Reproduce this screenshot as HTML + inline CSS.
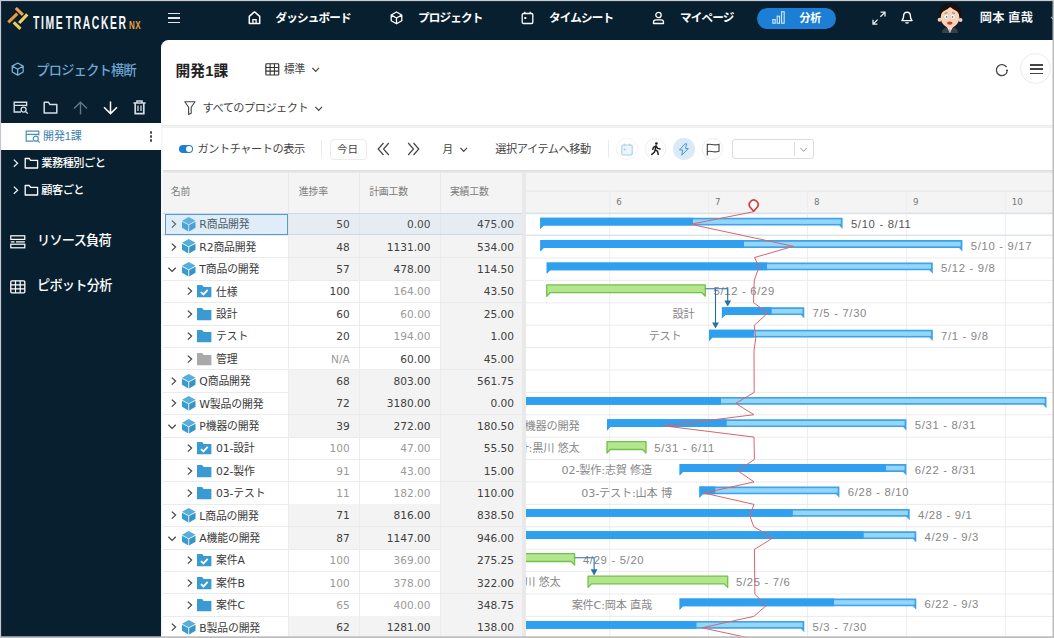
<!DOCTYPE html>
<html lang="ja"><head><meta charset="utf-8"><title>TimeTracker NX</title>
<style>
html,body{margin:0;padding:0;background:#081f2f;}
body{width:1054px;height:638px;overflow:hidden;position:relative;font-family:"Liberation Sans","Noto Sans CJK JP",sans-serif;}
#app{position:absolute;left:0;top:0;width:1054px;height:638px;overflow:hidden;background:#081f2f;}
.t{position:absolute;white-space:nowrap;}
.b{position:absolute;display:block;}
svg{overflow:visible;}
</style></head><body><div id="app">
<svg class="b" style="left:0.00px;top:0.00px;" width="40" height="40" viewBox="0 0 40 40" preserveAspectRatio="none">
<g stroke-linecap="butt" fill="none" stroke-width="3.1">
<line x1="15.8" y1="8" x2="22.9" y2="14.8" stroke="#f0a748"/>
<line x1="8.3" y1="22.3" x2="17.3" y2="13.7" stroke="#e99a45"/>
<line x1="27.3" y1="14.4" x2="19.2" y2="23" stroke="#f3d162"/>
<line x1="13.7" y1="22.4" x2="20.5" y2="28.8" stroke="#f1cb57"/>
</g></svg>
<div class="t" style="left:32.6px;top:10.9px;font-size:17.8px;line-height:24px;color:#f4f7fa;font-weight:700;transform:scaleX(0.585);transform-origin:0 50%;letter-spacing:2.7px;word-spacing:-5px;">TIME TRACKER</div>
<div class="t" style="left:129.3px;top:15.2px;font-size:11.8px;line-height:20px;color:#e9a13b;font-weight:700;transform:scaleX(0.68);transform-origin:0 50%;letter-spacing:0.6px;">NX</div>
<div class="b" style="left:168.00px;top:12.55px;width:12.40px;height:1.90px;background:#dfe6ee;"></div>
<div class="b" style="left:168.00px;top:17.05px;width:12.40px;height:1.90px;background:#dfe6ee;"></div>
<div class="b" style="left:168.00px;top:21.55px;width:12.40px;height:1.90px;background:#dfe6ee;"></div>
<svg class="b" style="left:247.80px;top:11.20px;" width="13" height="13.4" viewBox="0 0 13 13.4" preserveAspectRatio="none"><path d="M1.3 12.4 V5.4 Q6.5 0.6 6.5 0.9 Q6.5 0.6 11.7 5.4 V12.4 Z" fill="none" stroke="#fff" stroke-width="1.5" stroke-linejoin="round"/><path d="M4.9 12.4 V8.6 H8.1 V12.4" fill="none" stroke="#fff" stroke-width="1.3"/></svg>
<div class="t" style="top:9.90px;font-size:11.6px;color:#fff;line-height:16px;left:275.50px;font-weight:700;letter-spacing:-0.85px;">ダッシュボード</div>
<svg class="b" style="left:390.00px;top:11.20px;" width="13" height="14" viewBox="0 0 13 14" preserveAspectRatio="none"><path d="M6.5 1 L11.8 4 V9.8 L6.5 12.8 L1.2 9.8 V4 Z M1.4 4.1 L6.5 7 L11.6 4.1 M6.5 7 V12.6" fill="none" stroke="#fff" stroke-width="1.3" stroke-linejoin="round"/></svg>
<div class="t" style="top:9.90px;font-size:11.6px;color:#fff;line-height:16px;left:418.00px;font-weight:700;letter-spacing:-0.85px;">プロジェクト</div>
<svg class="b" style="left:521.00px;top:10.80px;" width="13" height="14" viewBox="0 0 13 14" preserveAspectRatio="none"><rect x="1.2" y="2.5" width="10.6" height="10" rx="1.3" fill="none" stroke="#fff" stroke-width="1.3"/><path d="M3.8 0.8 V3 M9.2 0.8 V3" stroke="#fff" stroke-width="1.3"/><rect x="3.3" y="6" width="2" height="2" fill="#fff"/></svg>
<div class="t" style="top:9.90px;font-size:11.6px;color:#fff;line-height:16px;left:549.00px;font-weight:700;letter-spacing:-0.85px;">タイムシート</div>
<svg class="b" style="left:652.00px;top:10.70px;" width="13" height="14" viewBox="0 0 13 14" preserveAspectRatio="none"><circle cx="6.5" cy="4" r="2.7" fill="none" stroke="#fff" stroke-width="1.3"/><path d="M1.5 12.5 V11 Q1.5 8.8 4 8.8 H9 Q11.5 8.8 11.5 11 V12.5 Z" fill="none" stroke="#fff" stroke-width="1.3" stroke-linejoin="round"/></svg>
<div class="t" style="top:9.90px;font-size:11.6px;color:#fff;line-height:16px;left:680.00px;font-weight:700;letter-spacing:-0.85px;">マイページ</div>
<div class="b" style="left:757.00px;top:7.60px;width:78.60px;height:21.40px;background:#1c7fd5;border-radius:11px;"></div>
<svg class="b" style="left:772.00px;top:11.40px;" width="13.4" height="13" viewBox="0 0 13.4 13" preserveAspectRatio="none"><rect x="0.8" y="8.6" width="2.4" height="3.6" fill="none" stroke="#d4e9fb" stroke-width="1.1"/><rect x="5.2" y="5.2" width="2.4" height="7" fill="none" stroke="#d4e9fb" stroke-width="1.1"/><rect x="9.6" y="0.8" width="2.6" height="11.4" fill="none" stroke="#d4e9fb" stroke-width="1.1"/></svg>
<div class="t" style="top:10.30px;font-size:11px;color:#fff;line-height:16px;left:799.60px;font-weight:700;letter-spacing:-0.4px;">分析</div>
<svg class="b" style="left:872.20px;top:10.60px;" width="14" height="14.4" viewBox="0 0 14 14.4" preserveAspectRatio="none"><path d="M8.6 1.2 H13 V5.6 M12.8 1.4 L8.4 5.8 M5.4 13.2 H1 V8.8 M1.2 13 L5.6 8.6" fill="none" stroke="#e8eef5" stroke-width="1.3"/></svg>
<svg class="b" style="left:900.00px;top:10.40px;" width="14" height="14" viewBox="0 0 14 14" preserveAspectRatio="none"><path d="M2 10.6 H12 Q10.4 9 10.4 6 Q10.4 2.2 7 2.2 Q3.6 2.2 3.6 6 Q3.6 9 2 10.6 Z" fill="none" stroke="#fff" stroke-width="1.4" stroke-linejoin="round"/><path d="M5.4 12.5 Q7 13.6 8.6 12.5" fill="none" stroke="#fff" stroke-width="1.3"/></svg>
<svg class="b" style="left:930px;top:0px;" width="40" height="40" viewBox="930 0 40 40">
<path d="M942 33 Q942.3 28.2 946.5 27.3 L953.3 27.3 Q957.6 28.2 958 33 Z" fill="#3b3f49"/>
<path d="M947 27 L949.9 33 L952.8 27 Z" fill="#f1f1f4"/>
<path d="M949.6 28.4 L950.2 28.4 L950.6 31.6 L949.9 33 L949.2 31.6 Z" fill="#9aa0ad"/>
<circle cx="939.6" cy="19.8" r="2" fill="#fbc9be"/><circle cx="960.5" cy="19.9" r="2" fill="#fbc9be"/>
<path d="M940.6 16 Q940.2 7.5 950 7.2 Q959.8 7.5 959.4 16 Q959.6 22.5 955 26 Q952 28.2 950 28.2 Q948 28.2 945 26 Q940.4 22.5 940.6 16 Z" fill="#fcd2b3"/>
<path d="M939.2 17.2 Q936.8 3.4 950 3 Q963.2 3.4 960.8 17.2 L959.3 16.6 Q958.8 11.5 955.2 10.2 Q952 9 950.3 6.6 Q948.4 9.2 944.8 10.4 Q941.2 11.8 940.8 16.6 Z" fill="#17110f"/>
<circle cx="946.4" cy="16.8" r="2.5" fill="#fdfdfd" stroke="#c9b8ae" stroke-width="0.5"/><circle cx="952.7" cy="16.8" r="2.5" fill="#fdfdfd" stroke="#c9b8ae" stroke-width="0.5"/>
<circle cx="946.6" cy="16.9" r="0.9" fill="#6c7a86"/><circle cx="952.5" cy="16.9" r="0.9" fill="#6c7a86"/>
<path d="M944.6 13.3 L947.6 12.8 M952 12.8 L955 13.3" stroke="#6b5040" stroke-width="0.7" fill="none"/>
<ellipse cx="949.8" cy="23.1" rx="2.8" ry="1.6" fill="#d63636"/>
</svg>
<div class="t" style="top:10.10px;font-size:12.2px;color:#f2f5f8;line-height:16px;left:979.80px;font-weight:700;letter-spacing:0.25px;">岡本 直哉</div>
<svg class="b" style="left:1050.30px;top:14.60px;" width="8" height="8" viewBox="0 0 8 8" preserveAspectRatio="none"><path d="M1 2 L4 5 L7 2" fill="none" stroke="#aab" stroke-width="1.1"/></svg>
<svg class="b" style="left:10.60px;top:62.40px;" width="13.4" height="14.4" viewBox="0 0 13 14" preserveAspectRatio="none"><path d="M6.5 1 L11.8 4 V9.8 L6.5 12.8 L1.2 9.8 V4 Z M1.4 4.1 L6.5 7 L11.6 4.1 M6.5 7 V12.6" fill="none" stroke="#7db3da" stroke-width="1.2" stroke-linejoin="round"/></svg>
<div class="t" style="top:62.80px;font-size:13.2px;color:#6ea6d3;line-height:16px;left:36.20px;font-weight:500;letter-spacing:-0.7px;">プロジェクト横断</div>
<svg class="b" style="left:12.80px;top:101.40px;" width="16" height="13" viewBox="0 0 16 13" preserveAspectRatio="none"><path d="M8 11 H1.2 V1.2 H13.6 V5.2 M1.2 4.4 H13.6" fill="none" stroke="#d5dde6" stroke-width="1.4"/><circle cx="10.6" cy="8.6" r="2.5" fill="none" stroke="#d5dde6" stroke-width="1.3"/><path d="M12.4 10.5 L14.8 12.6" stroke="#d5dde6" stroke-width="1.3"/></svg>
<svg class="b" style="left:42.80px;top:101.20px;" width="15" height="13" viewBox="0 0 15 13" preserveAspectRatio="none"><path d="M1.2 12 V1.2 H5.4 L6.8 3.4 H13.8 V12 Z" fill="none" stroke="#d5dde6" stroke-width="1.5" stroke-linejoin="round"/></svg>
<svg class="b" style="left:72.80px;top:101.00px;" width="15" height="14" viewBox="0 0 15 14" preserveAspectRatio="none"><path d="M7.5 13.4 V1.6 M1 7.6 L7.5 1.2 L14 7.6" fill="none" stroke="#61778a" stroke-width="1.4"/></svg>
<svg class="b" style="left:102.60px;top:101.00px;" width="15" height="14" viewBox="0 0 15 14" preserveAspectRatio="none"><path d="M7.5 0.4 V12.2 M1 6.2 L7.5 12.6 L14 6.2" fill="none" stroke="#fff" stroke-width="1.5"/></svg>
<svg class="b" style="left:133.00px;top:100.40px;" width="13" height="15" viewBox="0 0 13 15" preserveAspectRatio="none"><path d="M0.4 2.9 H12.6 M4 2.6 V0.9 H9 V2.6" fill="none" stroke="#d5dde6" stroke-width="1.5"/><path d="M2.2 3 V13.6 H10.8 V3" fill="none" stroke="#d5dde6" stroke-width="1.7"/><path d="M5 5.4 V11 M8 5.4 V11" stroke="#d5dde6" stroke-width="1.3"/></svg>
<div class="b" style="left:1.00px;top:122.60px;width:160.00px;height:27.20px;background:#fff;"></div>
<svg class="b" style="left:24.50px;top:130.00px;" width="16" height="13" viewBox="0 0 16 13" preserveAspectRatio="none"><path d="M8.5 11.2 H1.2 V1.2 H13.8 V5.4 M1.2 4.3 H13.8" fill="none" stroke="#4f8fb6" stroke-width="1.2"/><circle cx="10.8" cy="8.7" r="2.5" fill="none" stroke="#4f8fb6" stroke-width="1.2"/><path d="M12.6 10.6 L14.8 12.6" stroke="#4f8fb6" stroke-width="1.2"/></svg>
<div class="t" style="top:128.40px;font-size:11px;color:#3c80ae;line-height:16px;left:43.00px;letter-spacing:-0.1px;">開発1課</div>
<div class="b" style="left:149.70px;top:131.45px;width:2.30px;height:2.30px;background:#4a4a4a;border-radius:50%;"></div>
<div class="b" style="left:149.70px;top:135.45px;width:2.30px;height:2.30px;background:#4a4a4a;border-radius:50%;"></div>
<div class="b" style="left:149.70px;top:139.45px;width:2.30px;height:2.30px;background:#4a4a4a;border-radius:50%;"></div>
<svg class="b" style="left:12.80px;top:158.80px;" width="6" height="8.4" viewBox="0 0 6 8.4" preserveAspectRatio="none"><path d="M0.8 0.6 L4.6 4.2 L0.8 7.800000000000001" fill="none" stroke="#e8edf2" stroke-width="1.3"/></svg>
<svg class="b" style="left:23.50px;top:157.00px;" width="15" height="12" viewBox="0 0 15 12" preserveAspectRatio="none"><path d="M1.2 11 V1.5 H5.4 L6.6 3.4 H13.6 V11 Z" fill="none" stroke="#fff" stroke-width="1.3" stroke-linejoin="round"/></svg>
<div class="t" style="top:155.00px;font-size:11.2px;color:#fff;line-height:16px;left:41.30px;font-weight:500;letter-spacing:-0.5px;">業務種別ごと</div>
<svg class="b" style="left:12.80px;top:185.80px;" width="6" height="8.4" viewBox="0 0 6 8.4" preserveAspectRatio="none"><path d="M0.8 0.6 L4.6 4.2 L0.8 7.800000000000001" fill="none" stroke="#e8edf2" stroke-width="1.3"/></svg>
<svg class="b" style="left:23.50px;top:184.00px;" width="15" height="12" viewBox="0 0 15 12" preserveAspectRatio="none"><path d="M1.2 11 V1.5 H5.4 L6.6 3.4 H13.6 V11 Z" fill="none" stroke="#fff" stroke-width="1.3" stroke-linejoin="round"/></svg>
<div class="t" style="top:182.00px;font-size:11.2px;color:#fff;line-height:16px;left:41.30px;font-weight:500;letter-spacing:-0.5px;">顧客ごと</div>
<svg class="b" style="left:9.50px;top:235.00px;" width="16" height="14" viewBox="0 0 16 14" preserveAspectRatio="none"><rect x="0.8" y="0.8" width="14" height="3.6" fill="none" stroke="#fff" stroke-width="1.2"/><rect x="0.8" y="9.2" width="14" height="3.6" fill="none" stroke="#fff" stroke-width="1.2"/><path d="M0.8 6.8 H4.5 M6 6.8 H14.8" stroke="#fff" stroke-width="1.2"/></svg>
<div class="t" style="top:233.00px;font-size:13.2px;color:#fff;line-height:16px;left:37.00px;font-weight:500;letter-spacing:-0.75px;">リソース負荷</div>
<svg class="b" style="left:9.50px;top:280.00px;" width="16" height="14" viewBox="0 0 16 14" preserveAspectRatio="none"><rect x="0.8" y="0.8" width="14" height="12" rx="1" fill="none" stroke="#fff" stroke-width="1.3"/><path d="M0.8 4.8 H14.8 M0.8 8.8 H14.8 M5.5 0.8 V12.8 M10.2 0.8 V12.8" stroke="#fff" stroke-width="1.2"/></svg>
<div class="t" style="top:278.30px;font-size:13.2px;color:#fff;line-height:16px;left:37.00px;font-weight:500;letter-spacing:-0.75px;">ピボット分析</div>
<div class="b" style="left:161.00px;top:40.00px;width:893.00px;height:598.00px;background:#fff;border-top-left-radius:7.5px;"></div>
<div class="t" style="top:60.50px;font-size:14.7px;color:#222;line-height:20px;left:175.50px;font-weight:700;letter-spacing:0.15px;">開発1課</div>
<svg class="b" style="left:264.80px;top:63.00px;" width="14.6" height="12.8" viewBox="0 0 13.6 12.6" preserveAspectRatio="none"><rect x="0.8" y="0.8" width="12" height="11" rx="0.8" fill="none" stroke="#333" stroke-width="1.1"/><path d="M0.8 4.4 H12.8 M0.8 8 H12.8 M4.8 0.8 V11.8 M8.8 0.8 V11.8" stroke="#333" stroke-width="1"/></svg>
<div class="t" style="top:61.00px;font-size:10.8px;color:#444;line-height:16px;left:283.80px;">標準</div>
<svg class="b" style="left:312.20px;top:66.80px;" width="7.4" height="5.4" viewBox="0 0 7.4 5.4" preserveAspectRatio="none"><path d="M0.4 0.8 L3.7 4.4 L7.0 0.8" fill="none" stroke="#444" stroke-width="1.15"/></svg>
<svg class="b" style="left:184.00px;top:101.00px;" width="12" height="15" viewBox="0 0 12 15" preserveAspectRatio="none"><path d="M0.8 0.8 H11 L7.2 6.3 V12.2 L4.6 13.6 V6.3 Z" fill="none" stroke="#444" stroke-width="1.1" stroke-linejoin="round"/></svg>
<div class="t" style="top:100.30px;font-size:11.2px;color:#444;line-height:16px;left:202.50px;letter-spacing:-0.5px;">すべてのプロジェクト</div>
<svg class="b" style="left:314.80px;top:106.20px;" width="7.4" height="5.4" viewBox="0 0 7.4 5.4" preserveAspectRatio="none"><path d="M0.4 0.8 L3.7 4.4 L7.0 0.8" fill="none" stroke="#444" stroke-width="1.15"/></svg>
<svg class="b" style="left:994.50px;top:62.50px;" width="14" height="14" viewBox="0 0 14 14" preserveAspectRatio="none"><path d="M11.6 4.2 A5.5 5.5 0 1 0 12.2 8.6" fill="none" stroke="#444" stroke-width="1.3"/><circle cx="12" cy="7.6" r="1.1" fill="#444"/></svg>
<div class="b" style="left:1020.00px;top:53.00px;width:31.00px;height:31.00px;background:#fff;border:1px solid #ececec;border-radius:50%;box-sizing:border-box;"></div>
<div class="b" style="left:1030.00px;top:64.00px;width:12.50px;height:1.60px;background:#444;"></div>
<div class="b" style="left:1030.00px;top:68.40px;width:12.50px;height:1.60px;background:#444;"></div>
<div class="b" style="left:1030.00px;top:72.80px;width:12.50px;height:1.60px;background:#444;"></div>
<div class="b" style="left:161.00px;top:125.40px;width:893.00px;height:2.60px;background:#f1f1f1;"></div>
<div class="b" style="left:161.00px;top:124.80px;width:893.00px;height:0.80px;background:#ebebeb;"></div>
<div class="b" style="left:178.50px;top:145.00px;width:14.50px;height:7.80px;background:#1f7ed2;border-radius:4px;"></div>
<div class="b" style="left:185.90px;top:145.90px;width:6.00px;height:6.00px;background:#fff;border-radius:50%;"></div>
<div class="t" style="top:140.70px;font-size:11.2px;color:#444;line-height:16px;left:197.50px;letter-spacing:-0.45px;">ガントチャートの表示</div>
<div class="b" style="left:320.50px;top:140.00px;width:1.00px;height:18.00px;background:#ebebeb;"></div>
<div class="b" style="left:329.50px;top:138.50px;width:37.00px;height:21.00px;background:#fff;border:1px solid #ececec;border-radius:4px;box-sizing:border-box;"></div>
<div class="t" style="top:140.80px;font-size:10.6px;color:#444;line-height:16px;left:337.00px;">今日</div>
<svg class="b" style="left:377.30px;top:142.00px;" width="13" height="14" viewBox="0 0 13 14" preserveAspectRatio="none"><path d="M6.5 1 L1.2 7 L6.5 13 M11.8 1 L6.5 7 L11.8 13" fill="none" stroke="#444" stroke-width="1.2"/></svg>
<svg class="b" style="left:407.00px;top:142.00px;" width="13" height="14" viewBox="0 0 13 14" preserveAspectRatio="none"><path d="M1.2 1 L6.5 7 L1.2 13 M6.5 1 L11.8 7 L6.5 13" fill="none" stroke="#444" stroke-width="1.2"/></svg>
<div class="t" style="top:140.80px;font-size:10.6px;color:#444;line-height:16px;left:442.50px;">月</div>
<svg class="b" style="left:459.80px;top:146.90px;" width="7.4" height="5.4" viewBox="0 0 7.4 5.4" preserveAspectRatio="none"><path d="M0.4 0.8 L3.7 4.4 L7.0 0.8" fill="none" stroke="#444" stroke-width="1.15"/></svg>
<div class="t" style="top:140.80px;font-size:11.2px;color:#444;line-height:16px;left:495.30px;letter-spacing:-0.45px;">選択アイテムへ移動</div>
<div class="b" style="left:608.00px;top:140.00px;width:1.00px;height:18.00px;background:#ebebeb;"></div>
<div class="b" style="left:616.30px;top:138.20px;width:21.40px;height:21.40px;background:#fff;border:1px solid #f4f4f4;border-radius:50%;box-sizing:border-box;"></div>
<svg class="b" style="left:620.80px;top:142.80px;" width="12" height="13" viewBox="0 0 12 13" preserveAspectRatio="none"><rect x="0.8" y="2" width="10.4" height="10" rx="1.2" fill="#edf5fc" stroke="#a9cde9" stroke-width="1.1"/><path d="M3.4 0.6 V2.6 M8.6 0.6 V2.6" stroke="#a9cde9" stroke-width="1.1"/><rect x="2.8" y="5.6" width="1.7" height="1.7" fill="#9cc4e4"/></svg>
<div class="b" style="left:644.80px;top:138.20px;width:21.40px;height:21.40px;background:#fff;border:1px solid #eeeeee;border-radius:50%;box-sizing:border-box;"></div>
<svg class="b" style="left:649.50px;top:142.30px;" width="12" height="13" viewBox="0 0 12 13" preserveAspectRatio="none"><circle cx="6.4" cy="1.5" r="1.35" fill="#222"/><path d="M6 3.8 L5.2 7.6 L7.6 9.4 L8.2 12.4 M5.2 7.6 L4.4 10.2 L1.8 12.4 M6 4 L3.4 5.4 L2.8 7.4 M6.2 4.2 L7.8 6.4 L10 7" fill="none" stroke="#222" stroke-width="1.5" stroke-linecap="round" stroke-linejoin="round"/></svg>
<div class="b" style="left:673.30px;top:138.20px;width:21.40px;height:21.40px;background:#dbeaf7;border-radius:50%;"></div>
<svg class="b" style="left:678.20px;top:142.60px;" width="12" height="13" viewBox="0 0 12 13" preserveAspectRatio="none"><path d="M7 0.8 L1.4 7 H4.6 L3.8 12.2 L10.4 5.6 H7.4 L8.8 0.8 Z" fill="#d3e7f8" stroke="#4b9ad6" stroke-width="1" stroke-linejoin="round"/></svg>
<div class="b" style="left:701.80px;top:138.20px;width:21.40px;height:21.40px;background:#fff;border:1px solid #eeeeee;border-radius:50%;box-sizing:border-box;"></div>
<svg class="b" style="left:706.00px;top:142.60px;" width="14" height="13" viewBox="0 0 14 13" preserveAspectRatio="none"><path d="M1.3 12.6 V0.8 M1.3 1.8 C4 0 7.5 3.2 13 1.2 V8.2 C7.5 10.2 4 7 1.3 8.8" fill="none" stroke="#444" stroke-width="1.15" stroke-linejoin="round"/></svg>
<div class="b" style="left:732.30px;top:138.50px;width:82.00px;height:20.50px;background:#fff;border:1px solid #dcdcdc;border-radius:3px;box-sizing:border-box;"></div>
<div class="b" style="left:794.30px;top:142.00px;width:1.00px;height:14.00px;background:#dcdcdc;"></div>
<svg class="b" style="left:799.50px;top:146.80px;" width="7.2" height="5.4" viewBox="0 0 7.2 5.4" preserveAspectRatio="none"><path d="M0.4 0.8 L3.6 4.4 L6.8 0.8" fill="none" stroke="#999" stroke-width="1"/></svg>
<div class="b" style="left:163px;top:170px;width:891px;height:3px;background:linear-gradient(#dcdcdc,#ececec);"></div>
<div class="b" style="left:163.00px;top:172.80px;width:359.00px;height:40.20px;background:#f4f4f4;"></div>
<div class="b" style="left:288.10px;top:172.80px;width:1.00px;height:40.20px;background:#e9e9e9;"></div>
<div class="b" style="left:359.00px;top:172.80px;width:1.00px;height:40.20px;background:#e9e9e9;"></div>
<div class="b" style="left:439.90px;top:172.80px;width:1.00px;height:40.20px;background:#e9e9e9;"></div>
<div class="b" style="left:521.50px;top:172.80px;width:1.00px;height:40.20px;background:#e9e9e9;"></div>
<div class="t" style="top:184.10px;font-size:9.9px;color:#7c7c7c;line-height:16px;left:170.80px;letter-spacing:-0.2px;">名前</div>
<div class="t" style="top:184.10px;font-size:9.9px;color:#7c7c7c;line-height:16px;left:298.80px;letter-spacing:-0.2px;">進捗率</div>
<div class="t" style="top:184.10px;font-size:9.9px;color:#7c7c7c;line-height:16px;left:369.20px;letter-spacing:-0.2px;">計画工数</div>
<div class="t" style="top:184.10px;font-size:9.9px;color:#7c7c7c;line-height:16px;left:449.90px;letter-spacing:-0.2px;">実績工数</div>
<div class="b" style="left:288.60px;top:213.00px;width:233.40px;height:22.40px;background:#f3f3f3;"></div>
<div class="b" style="left:162.00px;top:234.90px;width:360.00px;height:1.00px;background:#ebebeb;"></div>
<div class="b" style="left:288.10px;top:213.00px;width:1.00px;height:22.40px;background:#ececec;"></div>
<div class="b" style="left:359.00px;top:213.00px;width:1.00px;height:22.40px;background:#ececec;"></div>
<div class="b" style="left:439.90px;top:213.00px;width:1.00px;height:22.40px;background:#ececec;"></div>
<svg class="b" style="left:171.00px;top:220.10px;" width="6" height="8.2" viewBox="0 0 6 8.2" preserveAspectRatio="none"><path d="M0.8 0.6 L4.6 4.1 L0.8 7.6" fill="none" stroke="#444" stroke-width="1.25"/></svg>
<svg class="b" style="left:181.50px;top:216.90px;" width="13.5" height="14.5" viewBox="0 0 14 15" preserveAspectRatio="none"><path d="M7 0 L14 4 L7 7.7 L0 4 Z" fill="#55aedb"/><path d="M0 4.9 L6.55 8.4 V15 L0 11.2 Z" fill="#3a9ccd"/><path d="M14 4.9 L7.45 8.4 V15 L14 11.2 Z" fill="#3795c6"/></svg>
<div class="t" style="top:217.40px;font-size:10.85px;color:#3a3a3a;line-height:16px;left:199.30px;letter-spacing:-0.15px;font-family:'DejaVu Sans','Noto Sans CJK JP',sans-serif;">R商品開発</div>
<div class="t" style="top:216.20px;font-size:10.6px;color:#404040;line-height:16px;right:704.30px;font-family:'DejaVu Sans','Noto Sans CJK JP',sans-serif;">50</div>
<div class="t" style="top:216.20px;font-size:10.6px;color:#404040;line-height:16px;right:623.40px;font-family:'DejaVu Sans','Noto Sans CJK JP',sans-serif;">0.00</div>
<div class="t" style="top:216.20px;font-size:10.6px;color:#404040;line-height:16px;right:540.00px;font-family:'DejaVu Sans','Noto Sans CJK JP',sans-serif;">475.00</div>
<div class="b" style="left:288.60px;top:235.40px;width:233.40px;height:22.40px;background:#f3f3f3;"></div>
<div class="b" style="left:162.00px;top:257.30px;width:360.00px;height:1.00px;background:#ebebeb;"></div>
<div class="b" style="left:288.10px;top:235.40px;width:1.00px;height:22.40px;background:#ececec;"></div>
<div class="b" style="left:359.00px;top:235.40px;width:1.00px;height:22.40px;background:#ececec;"></div>
<div class="b" style="left:439.90px;top:235.40px;width:1.00px;height:22.40px;background:#ececec;"></div>
<svg class="b" style="left:171.00px;top:242.50px;" width="6" height="8.2" viewBox="0 0 6 8.2" preserveAspectRatio="none"><path d="M0.8 0.6 L4.6 4.1 L0.8 7.6" fill="none" stroke="#444" stroke-width="1.25"/></svg>
<svg class="b" style="left:181.50px;top:239.30px;" width="13.5" height="14.5" viewBox="0 0 14 15" preserveAspectRatio="none"><path d="M7 0 L14 4 L7 7.7 L0 4 Z" fill="#55aedb"/><path d="M0 4.9 L6.55 8.4 V15 L0 11.2 Z" fill="#3a9ccd"/><path d="M14 4.9 L7.45 8.4 V15 L14 11.2 Z" fill="#3795c6"/></svg>
<div class="t" style="top:239.80px;font-size:10.85px;color:#3a3a3a;line-height:16px;left:199.30px;letter-spacing:-0.15px;font-family:'DejaVu Sans','Noto Sans CJK JP',sans-serif;">R2商品開発</div>
<div class="t" style="top:238.60px;font-size:10.6px;color:#404040;line-height:16px;right:704.30px;font-family:'DejaVu Sans','Noto Sans CJK JP',sans-serif;">48</div>
<div class="t" style="top:238.60px;font-size:10.6px;color:#404040;line-height:16px;right:623.40px;font-family:'DejaVu Sans','Noto Sans CJK JP',sans-serif;">1131.00</div>
<div class="t" style="top:238.60px;font-size:10.6px;color:#404040;line-height:16px;right:540.00px;font-family:'DejaVu Sans','Noto Sans CJK JP',sans-serif;">534.00</div>
<div class="b" style="left:288.60px;top:257.80px;width:233.40px;height:22.40px;background:#f3f3f3;"></div>
<div class="b" style="left:162.00px;top:279.70px;width:360.00px;height:1.00px;background:#ebebeb;"></div>
<div class="b" style="left:288.10px;top:257.80px;width:1.00px;height:22.40px;background:#ececec;"></div>
<div class="b" style="left:359.00px;top:257.80px;width:1.00px;height:22.40px;background:#ececec;"></div>
<div class="b" style="left:439.90px;top:257.80px;width:1.00px;height:22.40px;background:#ececec;"></div>
<svg class="b" style="left:168.40px;top:266.80px;" width="8.2" height="5.4" viewBox="0 0 8.2 5.4" preserveAspectRatio="none"><path d="M0.4 0.8 L4.1 4.4 L7.799999999999999 0.8" fill="none" stroke="#444" stroke-width="1.25"/></svg>
<svg class="b" style="left:181.50px;top:261.70px;" width="13.5" height="14.5" viewBox="0 0 14 15" preserveAspectRatio="none"><path d="M7 0 L14 4 L7 7.7 L0 4 Z" fill="#55aedb"/><path d="M0 4.9 L6.55 8.4 V15 L0 11.2 Z" fill="#3a9ccd"/><path d="M14 4.9 L7.45 8.4 V15 L14 11.2 Z" fill="#3795c6"/></svg>
<div class="t" style="top:262.20px;font-size:10.85px;color:#3a3a3a;line-height:16px;left:199.30px;letter-spacing:-0.15px;font-family:'DejaVu Sans','Noto Sans CJK JP',sans-serif;">T商品の開発</div>
<div class="t" style="top:261.00px;font-size:10.6px;color:#404040;line-height:16px;right:704.30px;font-family:'DejaVu Sans','Noto Sans CJK JP',sans-serif;">57</div>
<div class="t" style="top:261.00px;font-size:10.6px;color:#404040;line-height:16px;right:623.40px;font-family:'DejaVu Sans','Noto Sans CJK JP',sans-serif;">478.00</div>
<div class="t" style="top:261.00px;font-size:10.6px;color:#404040;line-height:16px;right:540.00px;font-family:'DejaVu Sans','Noto Sans CJK JP',sans-serif;">114.50</div>
<div class="b" style="left:440.40px;top:280.20px;width:81.60px;height:22.40px;background:#f3f3f3;"></div>
<div class="b" style="left:162.00px;top:302.10px;width:360.00px;height:1.00px;background:#ebebeb;"></div>
<div class="b" style="left:288.10px;top:280.20px;width:1.00px;height:22.40px;background:#ececec;"></div>
<div class="b" style="left:359.00px;top:280.20px;width:1.00px;height:22.40px;background:#ececec;"></div>
<div class="b" style="left:439.90px;top:280.20px;width:1.00px;height:22.40px;background:#ececec;"></div>
<svg class="b" style="left:187.00px;top:287.30px;" width="6" height="8.2" viewBox="0 0 6 8.2" preserveAspectRatio="none"><path d="M0.8 0.6 L4.6 4.1 L0.8 7.6" fill="none" stroke="#444" stroke-width="1.25"/></svg>
<svg class="b" style="left:197.40px;top:285.30px;" width="14.4" height="12.3" viewBox="0 0 14.5 12.5" preserveAspectRatio="none"><path d="M0 0 H5.2 L6.7 2 H14.5 V12.5 H0 Z" fill="#3a9bd2"/><path d="M4 7.2 L6.5 9.6 L10.8 5" fill="none" stroke="#fff" stroke-width="1.8"/></svg>
<div class="t" style="top:284.60px;font-size:10.85px;color:#3a3a3a;line-height:16px;left:216.00px;letter-spacing:-0.15px;font-family:'DejaVu Sans','Noto Sans CJK JP',sans-serif;">仕様</div>
<div class="t" style="top:283.40px;font-size:10.6px;color:#404040;line-height:16px;right:704.30px;font-family:'DejaVu Sans','Noto Sans CJK JP',sans-serif;">100</div>
<div class="t" style="top:283.40px;font-size:10.6px;color:#9a9a9a;line-height:16px;right:623.40px;font-family:'DejaVu Sans','Noto Sans CJK JP',sans-serif;">164.00</div>
<div class="t" style="top:283.40px;font-size:10.6px;color:#404040;line-height:16px;right:540.00px;font-family:'DejaVu Sans','Noto Sans CJK JP',sans-serif;">43.50</div>
<div class="b" style="left:440.40px;top:302.60px;width:81.60px;height:22.40px;background:#f3f3f3;"></div>
<div class="b" style="left:162.00px;top:324.50px;width:360.00px;height:1.00px;background:#ebebeb;"></div>
<div class="b" style="left:288.10px;top:302.60px;width:1.00px;height:22.40px;background:#ececec;"></div>
<div class="b" style="left:359.00px;top:302.60px;width:1.00px;height:22.40px;background:#ececec;"></div>
<div class="b" style="left:439.90px;top:302.60px;width:1.00px;height:22.40px;background:#ececec;"></div>
<svg class="b" style="left:187.00px;top:309.70px;" width="6" height="8.2" viewBox="0 0 6 8.2" preserveAspectRatio="none"><path d="M0.8 0.6 L4.6 4.1 L0.8 7.6" fill="none" stroke="#444" stroke-width="1.25"/></svg>
<svg class="b" style="left:197.40px;top:307.70px;" width="14.4" height="12.3" viewBox="0 0 14.5 12.5" preserveAspectRatio="none"><path d="M0 0 H5.2 L6.7 2 H14.5 V12.5 H0 Z" fill="#3a9bd2"/></svg>
<div class="t" style="top:307.00px;font-size:10.85px;color:#3a3a3a;line-height:16px;left:216.00px;letter-spacing:-0.15px;font-family:'DejaVu Sans','Noto Sans CJK JP',sans-serif;">設計</div>
<div class="t" style="top:305.80px;font-size:10.6px;color:#404040;line-height:16px;right:704.30px;font-family:'DejaVu Sans','Noto Sans CJK JP',sans-serif;">60</div>
<div class="t" style="top:305.80px;font-size:10.6px;color:#9a9a9a;line-height:16px;right:623.40px;font-family:'DejaVu Sans','Noto Sans CJK JP',sans-serif;">60.00</div>
<div class="t" style="top:305.80px;font-size:10.6px;color:#404040;line-height:16px;right:540.00px;font-family:'DejaVu Sans','Noto Sans CJK JP',sans-serif;">25.00</div>
<div class="b" style="left:440.40px;top:325.00px;width:81.60px;height:22.40px;background:#f3f3f3;"></div>
<div class="b" style="left:162.00px;top:346.90px;width:360.00px;height:1.00px;background:#ebebeb;"></div>
<div class="b" style="left:288.10px;top:325.00px;width:1.00px;height:22.40px;background:#ececec;"></div>
<div class="b" style="left:359.00px;top:325.00px;width:1.00px;height:22.40px;background:#ececec;"></div>
<div class="b" style="left:439.90px;top:325.00px;width:1.00px;height:22.40px;background:#ececec;"></div>
<svg class="b" style="left:187.00px;top:332.10px;" width="6" height="8.2" viewBox="0 0 6 8.2" preserveAspectRatio="none"><path d="M0.8 0.6 L4.6 4.1 L0.8 7.6" fill="none" stroke="#444" stroke-width="1.25"/></svg>
<svg class="b" style="left:197.40px;top:330.10px;" width="14.4" height="12.3" viewBox="0 0 14.5 12.5" preserveAspectRatio="none"><path d="M0 0 H5.2 L6.7 2 H14.5 V12.5 H0 Z" fill="#3a9bd2"/></svg>
<div class="t" style="top:329.40px;font-size:10.85px;color:#3a3a3a;line-height:16px;left:216.00px;letter-spacing:-0.15px;font-family:'DejaVu Sans','Noto Sans CJK JP',sans-serif;">テスト</div>
<div class="t" style="top:328.20px;font-size:10.6px;color:#404040;line-height:16px;right:704.30px;font-family:'DejaVu Sans','Noto Sans CJK JP',sans-serif;">20</div>
<div class="t" style="top:328.20px;font-size:10.6px;color:#9a9a9a;line-height:16px;right:623.40px;font-family:'DejaVu Sans','Noto Sans CJK JP',sans-serif;">194.00</div>
<div class="t" style="top:328.20px;font-size:10.6px;color:#404040;line-height:16px;right:540.00px;font-family:'DejaVu Sans','Noto Sans CJK JP',sans-serif;">1.00</div>
<div class="b" style="left:440.40px;top:347.40px;width:81.60px;height:22.40px;background:#f3f3f3;"></div>
<div class="b" style="left:162.00px;top:369.30px;width:360.00px;height:1.00px;background:#ebebeb;"></div>
<div class="b" style="left:288.10px;top:347.40px;width:1.00px;height:22.40px;background:#ececec;"></div>
<div class="b" style="left:359.00px;top:347.40px;width:1.00px;height:22.40px;background:#ececec;"></div>
<div class="b" style="left:439.90px;top:347.40px;width:1.00px;height:22.40px;background:#ececec;"></div>
<svg class="b" style="left:187.00px;top:354.50px;" width="6" height="8.2" viewBox="0 0 6 8.2" preserveAspectRatio="none"><path d="M0.8 0.6 L4.6 4.1 L0.8 7.6" fill="none" stroke="#444" stroke-width="1.25"/></svg>
<svg class="b" style="left:197.40px;top:352.50px;" width="14.4" height="12.3" viewBox="0 0 14.5 12.5" preserveAspectRatio="none"><path d="M0 0 H5.2 L6.7 2 H14.5 V12.5 H0 Z" fill="#a9a9a9"/></svg>
<div class="t" style="top:351.80px;font-size:10.85px;color:#3a3a3a;line-height:16px;left:216.00px;letter-spacing:-0.15px;font-family:'DejaVu Sans','Noto Sans CJK JP',sans-serif;">管理</div>
<div class="t" style="top:350.60px;font-size:10.6px;color:#9a9a9a;line-height:16px;right:704.30px;font-family:'DejaVu Sans','Noto Sans CJK JP',sans-serif;">N/A</div>
<div class="t" style="top:350.60px;font-size:10.6px;color:#404040;line-height:16px;right:623.40px;font-family:'DejaVu Sans','Noto Sans CJK JP',sans-serif;">60.00</div>
<div class="t" style="top:350.60px;font-size:10.6px;color:#404040;line-height:16px;right:540.00px;font-family:'DejaVu Sans','Noto Sans CJK JP',sans-serif;">45.00</div>
<div class="b" style="left:288.60px;top:369.80px;width:233.40px;height:22.40px;background:#f3f3f3;"></div>
<div class="b" style="left:162.00px;top:391.70px;width:360.00px;height:1.00px;background:#ebebeb;"></div>
<div class="b" style="left:288.10px;top:369.80px;width:1.00px;height:22.40px;background:#ececec;"></div>
<div class="b" style="left:359.00px;top:369.80px;width:1.00px;height:22.40px;background:#ececec;"></div>
<div class="b" style="left:439.90px;top:369.80px;width:1.00px;height:22.40px;background:#ececec;"></div>
<svg class="b" style="left:171.00px;top:376.90px;" width="6" height="8.2" viewBox="0 0 6 8.2" preserveAspectRatio="none"><path d="M0.8 0.6 L4.6 4.1 L0.8 7.6" fill="none" stroke="#444" stroke-width="1.25"/></svg>
<svg class="b" style="left:181.50px;top:373.70px;" width="13.5" height="14.5" viewBox="0 0 14 15" preserveAspectRatio="none"><path d="M7 0 L14 4 L7 7.7 L0 4 Z" fill="#55aedb"/><path d="M0 4.9 L6.55 8.4 V15 L0 11.2 Z" fill="#3a9ccd"/><path d="M14 4.9 L7.45 8.4 V15 L14 11.2 Z" fill="#3795c6"/></svg>
<div class="t" style="top:374.20px;font-size:10.85px;color:#3a3a3a;line-height:16px;left:199.30px;letter-spacing:-0.15px;font-family:'DejaVu Sans','Noto Sans CJK JP',sans-serif;">Q商品開発</div>
<div class="t" style="top:373.00px;font-size:10.6px;color:#404040;line-height:16px;right:704.30px;font-family:'DejaVu Sans','Noto Sans CJK JP',sans-serif;">68</div>
<div class="t" style="top:373.00px;font-size:10.6px;color:#404040;line-height:16px;right:623.40px;font-family:'DejaVu Sans','Noto Sans CJK JP',sans-serif;">803.00</div>
<div class="t" style="top:373.00px;font-size:10.6px;color:#404040;line-height:16px;right:540.00px;font-family:'DejaVu Sans','Noto Sans CJK JP',sans-serif;">561.75</div>
<div class="b" style="left:288.60px;top:392.20px;width:233.40px;height:22.40px;background:#f3f3f3;"></div>
<div class="b" style="left:162.00px;top:414.10px;width:360.00px;height:1.00px;background:#ebebeb;"></div>
<div class="b" style="left:288.10px;top:392.20px;width:1.00px;height:22.40px;background:#ececec;"></div>
<div class="b" style="left:359.00px;top:392.20px;width:1.00px;height:22.40px;background:#ececec;"></div>
<div class="b" style="left:439.90px;top:392.20px;width:1.00px;height:22.40px;background:#ececec;"></div>
<svg class="b" style="left:171.00px;top:399.30px;" width="6" height="8.2" viewBox="0 0 6 8.2" preserveAspectRatio="none"><path d="M0.8 0.6 L4.6 4.1 L0.8 7.6" fill="none" stroke="#444" stroke-width="1.25"/></svg>
<svg class="b" style="left:181.50px;top:396.10px;" width="13.5" height="14.5" viewBox="0 0 14 15" preserveAspectRatio="none"><path d="M7 0 L14 4 L7 7.7 L0 4 Z" fill="#55aedb"/><path d="M0 4.9 L6.55 8.4 V15 L0 11.2 Z" fill="#3a9ccd"/><path d="M14 4.9 L7.45 8.4 V15 L14 11.2 Z" fill="#3795c6"/></svg>
<div class="t" style="top:396.60px;font-size:10.85px;color:#3a3a3a;line-height:16px;left:199.30px;letter-spacing:-0.15px;font-family:'DejaVu Sans','Noto Sans CJK JP',sans-serif;">W製品の開発</div>
<div class="t" style="top:395.40px;font-size:10.6px;color:#404040;line-height:16px;right:704.30px;font-family:'DejaVu Sans','Noto Sans CJK JP',sans-serif;">72</div>
<div class="t" style="top:395.40px;font-size:10.6px;color:#404040;line-height:16px;right:623.40px;font-family:'DejaVu Sans','Noto Sans CJK JP',sans-serif;">3180.00</div>
<div class="t" style="top:395.40px;font-size:10.6px;color:#404040;line-height:16px;right:540.00px;font-family:'DejaVu Sans','Noto Sans CJK JP',sans-serif;">0.00</div>
<div class="b" style="left:288.60px;top:414.60px;width:233.40px;height:22.40px;background:#f3f3f3;"></div>
<div class="b" style="left:162.00px;top:436.50px;width:360.00px;height:1.00px;background:#ebebeb;"></div>
<div class="b" style="left:288.10px;top:414.60px;width:1.00px;height:22.40px;background:#ececec;"></div>
<div class="b" style="left:359.00px;top:414.60px;width:1.00px;height:22.40px;background:#ececec;"></div>
<div class="b" style="left:439.90px;top:414.60px;width:1.00px;height:22.40px;background:#ececec;"></div>
<svg class="b" style="left:168.40px;top:423.60px;" width="8.2" height="5.4" viewBox="0 0 8.2 5.4" preserveAspectRatio="none"><path d="M0.4 0.8 L4.1 4.4 L7.799999999999999 0.8" fill="none" stroke="#444" stroke-width="1.25"/></svg>
<svg class="b" style="left:181.50px;top:418.50px;" width="13.5" height="14.5" viewBox="0 0 14 15" preserveAspectRatio="none"><path d="M7 0 L14 4 L7 7.7 L0 4 Z" fill="#55aedb"/><path d="M0 4.9 L6.55 8.4 V15 L0 11.2 Z" fill="#3a9ccd"/><path d="M14 4.9 L7.45 8.4 V15 L14 11.2 Z" fill="#3795c6"/></svg>
<div class="t" style="top:419.00px;font-size:10.85px;color:#3a3a3a;line-height:16px;left:199.30px;letter-spacing:-0.15px;font-family:'DejaVu Sans','Noto Sans CJK JP',sans-serif;">P機器の開発</div>
<div class="t" style="top:417.80px;font-size:10.6px;color:#404040;line-height:16px;right:704.30px;font-family:'DejaVu Sans','Noto Sans CJK JP',sans-serif;">39</div>
<div class="t" style="top:417.80px;font-size:10.6px;color:#404040;line-height:16px;right:623.40px;font-family:'DejaVu Sans','Noto Sans CJK JP',sans-serif;">272.00</div>
<div class="t" style="top:417.80px;font-size:10.6px;color:#404040;line-height:16px;right:540.00px;font-family:'DejaVu Sans','Noto Sans CJK JP',sans-serif;">180.50</div>
<div class="b" style="left:440.40px;top:437.00px;width:81.60px;height:22.40px;background:#f3f3f3;"></div>
<div class="b" style="left:162.00px;top:458.90px;width:360.00px;height:1.00px;background:#ebebeb;"></div>
<div class="b" style="left:288.10px;top:437.00px;width:1.00px;height:22.40px;background:#ececec;"></div>
<div class="b" style="left:359.00px;top:437.00px;width:1.00px;height:22.40px;background:#ececec;"></div>
<div class="b" style="left:439.90px;top:437.00px;width:1.00px;height:22.40px;background:#ececec;"></div>
<svg class="b" style="left:187.00px;top:444.10px;" width="6" height="8.2" viewBox="0 0 6 8.2" preserveAspectRatio="none"><path d="M0.8 0.6 L4.6 4.1 L0.8 7.6" fill="none" stroke="#444" stroke-width="1.25"/></svg>
<svg class="b" style="left:197.40px;top:442.10px;" width="14.4" height="12.3" viewBox="0 0 14.5 12.5" preserveAspectRatio="none"><path d="M0 0 H5.2 L6.7 2 H14.5 V12.5 H0 Z" fill="#3a9bd2"/><path d="M4 7.2 L6.5 9.6 L10.8 5" fill="none" stroke="#fff" stroke-width="1.8"/></svg>
<div class="t" style="top:441.40px;font-size:10.85px;color:#3a3a3a;line-height:16px;left:216.00px;letter-spacing:-0.15px;font-family:'DejaVu Sans','Noto Sans CJK JP',sans-serif;">01-設計</div>
<div class="t" style="top:440.20px;font-size:10.6px;color:#9a9a9a;line-height:16px;right:704.30px;font-family:'DejaVu Sans','Noto Sans CJK JP',sans-serif;">100</div>
<div class="t" style="top:440.20px;font-size:10.6px;color:#9a9a9a;line-height:16px;right:623.40px;font-family:'DejaVu Sans','Noto Sans CJK JP',sans-serif;">47.00</div>
<div class="t" style="top:440.20px;font-size:10.6px;color:#404040;line-height:16px;right:540.00px;font-family:'DejaVu Sans','Noto Sans CJK JP',sans-serif;">55.50</div>
<div class="b" style="left:440.40px;top:459.40px;width:81.60px;height:22.40px;background:#f3f3f3;"></div>
<div class="b" style="left:162.00px;top:481.30px;width:360.00px;height:1.00px;background:#ebebeb;"></div>
<div class="b" style="left:288.10px;top:459.40px;width:1.00px;height:22.40px;background:#ececec;"></div>
<div class="b" style="left:359.00px;top:459.40px;width:1.00px;height:22.40px;background:#ececec;"></div>
<div class="b" style="left:439.90px;top:459.40px;width:1.00px;height:22.40px;background:#ececec;"></div>
<svg class="b" style="left:187.00px;top:466.50px;" width="6" height="8.2" viewBox="0 0 6 8.2" preserveAspectRatio="none"><path d="M0.8 0.6 L4.6 4.1 L0.8 7.6" fill="none" stroke="#444" stroke-width="1.25"/></svg>
<svg class="b" style="left:197.40px;top:464.50px;" width="14.4" height="12.3" viewBox="0 0 14.5 12.5" preserveAspectRatio="none"><path d="M0 0 H5.2 L6.7 2 H14.5 V12.5 H0 Z" fill="#3a9bd2"/></svg>
<div class="t" style="top:463.80px;font-size:10.85px;color:#3a3a3a;line-height:16px;left:216.00px;letter-spacing:-0.15px;font-family:'DejaVu Sans','Noto Sans CJK JP',sans-serif;">02-製作</div>
<div class="t" style="top:462.60px;font-size:10.6px;color:#9a9a9a;line-height:16px;right:704.30px;font-family:'DejaVu Sans','Noto Sans CJK JP',sans-serif;">91</div>
<div class="t" style="top:462.60px;font-size:10.6px;color:#9a9a9a;line-height:16px;right:623.40px;font-family:'DejaVu Sans','Noto Sans CJK JP',sans-serif;">43.00</div>
<div class="t" style="top:462.60px;font-size:10.6px;color:#404040;line-height:16px;right:540.00px;font-family:'DejaVu Sans','Noto Sans CJK JP',sans-serif;">15.00</div>
<div class="b" style="left:440.40px;top:481.80px;width:81.60px;height:22.40px;background:#f3f3f3;"></div>
<div class="b" style="left:162.00px;top:503.70px;width:360.00px;height:1.00px;background:#ebebeb;"></div>
<div class="b" style="left:288.10px;top:481.80px;width:1.00px;height:22.40px;background:#ececec;"></div>
<div class="b" style="left:359.00px;top:481.80px;width:1.00px;height:22.40px;background:#ececec;"></div>
<div class="b" style="left:439.90px;top:481.80px;width:1.00px;height:22.40px;background:#ececec;"></div>
<svg class="b" style="left:187.00px;top:488.90px;" width="6" height="8.2" viewBox="0 0 6 8.2" preserveAspectRatio="none"><path d="M0.8 0.6 L4.6 4.1 L0.8 7.6" fill="none" stroke="#444" stroke-width="1.25"/></svg>
<svg class="b" style="left:197.40px;top:486.90px;" width="14.4" height="12.3" viewBox="0 0 14.5 12.5" preserveAspectRatio="none"><path d="M0 0 H5.2 L6.7 2 H14.5 V12.5 H0 Z" fill="#3a9bd2"/></svg>
<div class="t" style="top:486.20px;font-size:10.85px;color:#3a3a3a;line-height:16px;left:216.00px;letter-spacing:-0.15px;font-family:'DejaVu Sans','Noto Sans CJK JP',sans-serif;">03-テスト</div>
<div class="t" style="top:485.00px;font-size:10.6px;color:#9a9a9a;line-height:16px;right:704.30px;font-family:'DejaVu Sans','Noto Sans CJK JP',sans-serif;">11</div>
<div class="t" style="top:485.00px;font-size:10.6px;color:#9a9a9a;line-height:16px;right:623.40px;font-family:'DejaVu Sans','Noto Sans CJK JP',sans-serif;">182.00</div>
<div class="t" style="top:485.00px;font-size:10.6px;color:#404040;line-height:16px;right:540.00px;font-family:'DejaVu Sans','Noto Sans CJK JP',sans-serif;">110.00</div>
<div class="b" style="left:288.60px;top:504.20px;width:233.40px;height:22.40px;background:#f3f3f3;"></div>
<div class="b" style="left:162.00px;top:526.10px;width:360.00px;height:1.00px;background:#ebebeb;"></div>
<div class="b" style="left:288.10px;top:504.20px;width:1.00px;height:22.40px;background:#ececec;"></div>
<div class="b" style="left:359.00px;top:504.20px;width:1.00px;height:22.40px;background:#ececec;"></div>
<div class="b" style="left:439.90px;top:504.20px;width:1.00px;height:22.40px;background:#ececec;"></div>
<svg class="b" style="left:171.00px;top:511.30px;" width="6" height="8.2" viewBox="0 0 6 8.2" preserveAspectRatio="none"><path d="M0.8 0.6 L4.6 4.1 L0.8 7.6" fill="none" stroke="#444" stroke-width="1.25"/></svg>
<svg class="b" style="left:181.50px;top:508.10px;" width="13.5" height="14.5" viewBox="0 0 14 15" preserveAspectRatio="none"><path d="M7 0 L14 4 L7 7.7 L0 4 Z" fill="#55aedb"/><path d="M0 4.9 L6.55 8.4 V15 L0 11.2 Z" fill="#3a9ccd"/><path d="M14 4.9 L7.45 8.4 V15 L14 11.2 Z" fill="#3795c6"/></svg>
<div class="t" style="top:508.60px;font-size:10.85px;color:#3a3a3a;line-height:16px;left:199.30px;letter-spacing:-0.15px;font-family:'DejaVu Sans','Noto Sans CJK JP',sans-serif;">L商品の開発</div>
<div class="t" style="top:507.40px;font-size:10.6px;color:#404040;line-height:16px;right:704.30px;font-family:'DejaVu Sans','Noto Sans CJK JP',sans-serif;">71</div>
<div class="t" style="top:507.40px;font-size:10.6px;color:#404040;line-height:16px;right:623.40px;font-family:'DejaVu Sans','Noto Sans CJK JP',sans-serif;">816.00</div>
<div class="t" style="top:507.40px;font-size:10.6px;color:#404040;line-height:16px;right:540.00px;font-family:'DejaVu Sans','Noto Sans CJK JP',sans-serif;">838.50</div>
<div class="b" style="left:288.60px;top:526.60px;width:233.40px;height:22.40px;background:#f3f3f3;"></div>
<div class="b" style="left:162.00px;top:548.50px;width:360.00px;height:1.00px;background:#ebebeb;"></div>
<div class="b" style="left:288.10px;top:526.60px;width:1.00px;height:22.40px;background:#ececec;"></div>
<div class="b" style="left:359.00px;top:526.60px;width:1.00px;height:22.40px;background:#ececec;"></div>
<div class="b" style="left:439.90px;top:526.60px;width:1.00px;height:22.40px;background:#ececec;"></div>
<svg class="b" style="left:168.40px;top:535.60px;" width="8.2" height="5.4" viewBox="0 0 8.2 5.4" preserveAspectRatio="none"><path d="M0.4 0.8 L4.1 4.4 L7.799999999999999 0.8" fill="none" stroke="#444" stroke-width="1.25"/></svg>
<svg class="b" style="left:181.50px;top:530.50px;" width="13.5" height="14.5" viewBox="0 0 14 15" preserveAspectRatio="none"><path d="M7 0 L14 4 L7 7.7 L0 4 Z" fill="#55aedb"/><path d="M0 4.9 L6.55 8.4 V15 L0 11.2 Z" fill="#3a9ccd"/><path d="M14 4.9 L7.45 8.4 V15 L14 11.2 Z" fill="#3795c6"/></svg>
<div class="t" style="top:531.00px;font-size:10.85px;color:#3a3a3a;line-height:16px;left:199.30px;letter-spacing:-0.15px;font-family:'DejaVu Sans','Noto Sans CJK JP',sans-serif;">A機能の開発</div>
<div class="t" style="top:529.80px;font-size:10.6px;color:#404040;line-height:16px;right:704.30px;font-family:'DejaVu Sans','Noto Sans CJK JP',sans-serif;">87</div>
<div class="t" style="top:529.80px;font-size:10.6px;color:#404040;line-height:16px;right:623.40px;font-family:'DejaVu Sans','Noto Sans CJK JP',sans-serif;">1147.00</div>
<div class="t" style="top:529.80px;font-size:10.6px;color:#404040;line-height:16px;right:540.00px;font-family:'DejaVu Sans','Noto Sans CJK JP',sans-serif;">946.00</div>
<div class="b" style="left:440.40px;top:549.00px;width:81.60px;height:22.40px;background:#f3f3f3;"></div>
<div class="b" style="left:162.00px;top:570.90px;width:360.00px;height:1.00px;background:#ebebeb;"></div>
<div class="b" style="left:288.10px;top:549.00px;width:1.00px;height:22.40px;background:#ececec;"></div>
<div class="b" style="left:359.00px;top:549.00px;width:1.00px;height:22.40px;background:#ececec;"></div>
<div class="b" style="left:439.90px;top:549.00px;width:1.00px;height:22.40px;background:#ececec;"></div>
<svg class="b" style="left:187.00px;top:556.10px;" width="6" height="8.2" viewBox="0 0 6 8.2" preserveAspectRatio="none"><path d="M0.8 0.6 L4.6 4.1 L0.8 7.6" fill="none" stroke="#444" stroke-width="1.25"/></svg>
<svg class="b" style="left:197.40px;top:554.10px;" width="14.4" height="12.3" viewBox="0 0 14.5 12.5" preserveAspectRatio="none"><path d="M0 0 H5.2 L6.7 2 H14.5 V12.5 H0 Z" fill="#3a9bd2"/><path d="M4 7.2 L6.5 9.6 L10.8 5" fill="none" stroke="#fff" stroke-width="1.8"/></svg>
<div class="t" style="top:553.40px;font-size:10.85px;color:#3a3a3a;line-height:16px;left:216.00px;letter-spacing:-0.15px;font-family:'DejaVu Sans','Noto Sans CJK JP',sans-serif;">案件A</div>
<div class="t" style="top:552.20px;font-size:10.6px;color:#9a9a9a;line-height:16px;right:704.30px;font-family:'DejaVu Sans','Noto Sans CJK JP',sans-serif;">100</div>
<div class="t" style="top:552.20px;font-size:10.6px;color:#9a9a9a;line-height:16px;right:623.40px;font-family:'DejaVu Sans','Noto Sans CJK JP',sans-serif;">369.00</div>
<div class="t" style="top:552.20px;font-size:10.6px;color:#404040;line-height:16px;right:540.00px;font-family:'DejaVu Sans','Noto Sans CJK JP',sans-serif;">275.25</div>
<div class="b" style="left:440.40px;top:571.40px;width:81.60px;height:22.40px;background:#f3f3f3;"></div>
<div class="b" style="left:162.00px;top:593.30px;width:360.00px;height:1.00px;background:#ebebeb;"></div>
<div class="b" style="left:288.10px;top:571.40px;width:1.00px;height:22.40px;background:#ececec;"></div>
<div class="b" style="left:359.00px;top:571.40px;width:1.00px;height:22.40px;background:#ececec;"></div>
<div class="b" style="left:439.90px;top:571.40px;width:1.00px;height:22.40px;background:#ececec;"></div>
<svg class="b" style="left:187.00px;top:578.50px;" width="6" height="8.2" viewBox="0 0 6 8.2" preserveAspectRatio="none"><path d="M0.8 0.6 L4.6 4.1 L0.8 7.6" fill="none" stroke="#444" stroke-width="1.25"/></svg>
<svg class="b" style="left:197.40px;top:576.50px;" width="14.4" height="12.3" viewBox="0 0 14.5 12.5" preserveAspectRatio="none"><path d="M0 0 H5.2 L6.7 2 H14.5 V12.5 H0 Z" fill="#3a9bd2"/><path d="M4 7.2 L6.5 9.6 L10.8 5" fill="none" stroke="#fff" stroke-width="1.8"/></svg>
<div class="t" style="top:575.80px;font-size:10.85px;color:#3a3a3a;line-height:16px;left:216.00px;letter-spacing:-0.15px;font-family:'DejaVu Sans','Noto Sans CJK JP',sans-serif;">案件B</div>
<div class="t" style="top:574.60px;font-size:10.6px;color:#9a9a9a;line-height:16px;right:704.30px;font-family:'DejaVu Sans','Noto Sans CJK JP',sans-serif;">100</div>
<div class="t" style="top:574.60px;font-size:10.6px;color:#9a9a9a;line-height:16px;right:623.40px;font-family:'DejaVu Sans','Noto Sans CJK JP',sans-serif;">378.00</div>
<div class="t" style="top:574.60px;font-size:10.6px;color:#404040;line-height:16px;right:540.00px;font-family:'DejaVu Sans','Noto Sans CJK JP',sans-serif;">322.00</div>
<div class="b" style="left:440.40px;top:593.80px;width:81.60px;height:22.40px;background:#f3f3f3;"></div>
<div class="b" style="left:162.00px;top:615.70px;width:360.00px;height:1.00px;background:#ebebeb;"></div>
<div class="b" style="left:288.10px;top:593.80px;width:1.00px;height:22.40px;background:#ececec;"></div>
<div class="b" style="left:359.00px;top:593.80px;width:1.00px;height:22.40px;background:#ececec;"></div>
<div class="b" style="left:439.90px;top:593.80px;width:1.00px;height:22.40px;background:#ececec;"></div>
<svg class="b" style="left:187.00px;top:600.90px;" width="6" height="8.2" viewBox="0 0 6 8.2" preserveAspectRatio="none"><path d="M0.8 0.6 L4.6 4.1 L0.8 7.6" fill="none" stroke="#444" stroke-width="1.25"/></svg>
<svg class="b" style="left:197.40px;top:598.90px;" width="14.4" height="12.3" viewBox="0 0 14.5 12.5" preserveAspectRatio="none"><path d="M0 0 H5.2 L6.7 2 H14.5 V12.5 H0 Z" fill="#3a9bd2"/></svg>
<div class="t" style="top:598.20px;font-size:10.85px;color:#3a3a3a;line-height:16px;left:216.00px;letter-spacing:-0.15px;font-family:'DejaVu Sans','Noto Sans CJK JP',sans-serif;">案件C</div>
<div class="t" style="top:597.00px;font-size:10.6px;color:#9a9a9a;line-height:16px;right:704.30px;font-family:'DejaVu Sans','Noto Sans CJK JP',sans-serif;">65</div>
<div class="t" style="top:597.00px;font-size:10.6px;color:#9a9a9a;line-height:16px;right:623.40px;font-family:'DejaVu Sans','Noto Sans CJK JP',sans-serif;">400.00</div>
<div class="t" style="top:597.00px;font-size:10.6px;color:#404040;line-height:16px;right:540.00px;font-family:'DejaVu Sans','Noto Sans CJK JP',sans-serif;">348.75</div>
<div class="b" style="left:288.60px;top:616.20px;width:233.40px;height:22.40px;background:#f3f3f3;"></div>
<div class="b" style="left:162.00px;top:638.10px;width:360.00px;height:1.00px;background:#ebebeb;"></div>
<div class="b" style="left:288.10px;top:616.20px;width:1.00px;height:22.40px;background:#ececec;"></div>
<div class="b" style="left:359.00px;top:616.20px;width:1.00px;height:22.40px;background:#ececec;"></div>
<div class="b" style="left:439.90px;top:616.20px;width:1.00px;height:22.40px;background:#ececec;"></div>
<svg class="b" style="left:171.00px;top:623.30px;" width="6" height="8.2" viewBox="0 0 6 8.2" preserveAspectRatio="none"><path d="M0.8 0.6 L4.6 4.1 L0.8 7.6" fill="none" stroke="#444" stroke-width="1.25"/></svg>
<svg class="b" style="left:181.50px;top:620.10px;" width="13.5" height="14.5" viewBox="0 0 14 15" preserveAspectRatio="none"><path d="M7 0 L14 4 L7 7.7 L0 4 Z" fill="#55aedb"/><path d="M0 4.9 L6.55 8.4 V15 L0 11.2 Z" fill="#3a9ccd"/><path d="M14 4.9 L7.45 8.4 V15 L14 11.2 Z" fill="#3795c6"/></svg>
<div class="t" style="top:620.60px;font-size:10.85px;color:#3a3a3a;line-height:16px;left:199.30px;letter-spacing:-0.15px;font-family:'DejaVu Sans','Noto Sans CJK JP',sans-serif;">B製品の開発</div>
<div class="t" style="top:619.40px;font-size:10.6px;color:#404040;line-height:16px;right:704.30px;font-family:'DejaVu Sans','Noto Sans CJK JP',sans-serif;">62</div>
<div class="t" style="top:619.40px;font-size:10.6px;color:#404040;line-height:16px;right:623.40px;font-family:'DejaVu Sans','Noto Sans CJK JP',sans-serif;">1281.00</div>
<div class="t" style="top:619.40px;font-size:10.6px;color:#404040;line-height:16px;right:540.00px;font-family:'DejaVu Sans','Noto Sans CJK JP',sans-serif;">138.00</div>
<div class="b" style="left:162.00px;top:213.00px;width:892.00px;height:22.40px;background:rgba(120,180,225,0.10);border-top:1px solid #c9dbe8;border-bottom:1px solid #c9dbe8;box-sizing:border-box;"></div>
<div class="b" style="left:165.20px;top:213.50px;width:122.60px;height:21.20px;background:rgba(140,195,235,0.18);border:1px solid #5a9bc9;box-sizing:border-box;"></div>
<div class="b" style="left:161.00px;top:128.00px;width:2.20px;height:510.00px;background:#f6f6f6;"></div>
<div class="b" style="left:522.00px;top:172.80px;width:4.00px;height:465.20px;background:#e9e9e9;"></div>
<svg class="b" style="left:526.0px;top:172.8px;overflow:hidden;" width="528.0" height="465.2" viewBox="526.0 172.8 528.0 465.2" font-family='"Liberation Sans","Noto Sans CJK JP",sans-serif'>
<rect x="526.0" y="172.8" width="528.0" height="40.19999999999999" fill="#f4f4f4"/>
<rect x="526.0" y="213.0" width="528.0" height="425.0" fill="#fff"/>
<rect x="526.0" y="190.4" width="528.0" height="1" fill="#e6e6e6"/>
<rect x="526.0" y="212.4" width="528.0" height="1.2" fill="#dcdcdc"/>
<rect x="609.2" y="191" width="1" height="447" fill="#eeeeee"/>
<text x="616.2" y="205.1" font-size="8.7" font-family="'DejaVu Sans','Noto Sans CJK JP',sans-serif" fill="#777">6</text>
<rect x="708.1" y="191" width="1" height="447" fill="#eeeeee"/>
<text x="715.1" y="205.1" font-size="8.7" font-family="'DejaVu Sans','Noto Sans CJK JP',sans-serif" fill="#777">7</text>
<rect x="807.0" y="191" width="1" height="447" fill="#eeeeee"/>
<text x="814.0" y="205.1" font-size="8.7" font-family="'DejaVu Sans','Noto Sans CJK JP',sans-serif" fill="#777">8</text>
<rect x="905.9" y="191" width="1" height="447" fill="#eeeeee"/>
<text x="912.9" y="205.1" font-size="8.7" font-family="'DejaVu Sans','Noto Sans CJK JP',sans-serif" fill="#777">9</text>
<rect x="1004.8" y="191" width="1" height="447" fill="#eeeeee"/>
<text x="1011.8" y="205.1" font-size="8.7" font-family="'DejaVu Sans','Noto Sans CJK JP',sans-serif" fill="#777">10</text>
<rect x="526.0" y="234.9" width="528.0" height="1" fill="#ebebeb"/>
<rect x="526.0" y="257.3" width="528.0" height="1" fill="#ebebeb"/>
<rect x="526.0" y="279.7" width="528.0" height="1" fill="#ebebeb"/>
<rect x="526.0" y="302.1" width="528.0" height="1" fill="#ebebeb"/>
<rect x="526.0" y="324.5" width="528.0" height="1" fill="#ebebeb"/>
<rect x="526.0" y="346.9" width="528.0" height="1" fill="#ebebeb"/>
<rect x="526.0" y="369.3" width="528.0" height="1" fill="#ebebeb"/>
<rect x="526.0" y="391.7" width="528.0" height="1" fill="#ebebeb"/>
<rect x="526.0" y="414.1" width="528.0" height="1" fill="#ebebeb"/>
<rect x="526.0" y="436.5" width="528.0" height="1" fill="#ebebeb"/>
<rect x="526.0" y="458.9" width="528.0" height="1" fill="#ebebeb"/>
<rect x="526.0" y="481.3" width="528.0" height="1" fill="#ebebeb"/>
<rect x="526.0" y="503.7" width="528.0" height="1" fill="#ebebeb"/>
<rect x="526.0" y="526.1" width="528.0" height="1" fill="#ebebeb"/>
<rect x="526.0" y="548.5" width="528.0" height="1" fill="#ebebeb"/>
<rect x="526.0" y="570.9" width="528.0" height="1" fill="#ebebeb"/>
<rect x="526.0" y="593.3" width="528.0" height="1" fill="#ebebeb"/>
<rect x="526.0" y="615.7" width="528.0" height="1" fill="#ebebeb"/>
<rect x="526.0" y="638.1" width="528.0" height="1" fill="#ebebeb"/>
<rect x="526.0" y="213.0" width="528.0" height="22.4" fill="rgba(120,180,225,0.0)"/>
<rect x="526.0" y="213.0" width="528.0" height="1" fill="#d6e2ea"/><rect x="526.0" y="234.4" width="528.0" height="1" fill="#d6e2ea"/>
<path d="M540.3 217.5 H842.6 V228.8 L839.3 225.3 H543.6 L540.3 228.8 Z" fill="#3ea3e8"/>
<rect x="693.0" y="219.2" width="147.8" height="4.5" fill="#93d6f8"/>
<path d="M540.3 217.5 H693.0 V225.3 H543.6 L540.3 228.8 Z" fill="#2f9ff0"/>
<text x="850.9" y="227.4" font-size="11.3" letter-spacing="0.68" fill="#555">5/10 - 8/11</text>
<path d="M540.3 239.9 H962.4 V251.20000000000002 L959.1 247.70000000000002 H543.6 L540.3 251.20000000000002 Z" fill="#3ea3e8"/>
<rect x="744.0" y="241.6" width="216.6" height="4.5" fill="#93d6f8"/>
<path d="M540.3 239.9 H744.0 V247.70000000000002 H543.6 L540.3 251.20000000000002 Z" fill="#2f9ff0"/>
<text x="970.7" y="249.8" font-size="11.3" letter-spacing="0.68" fill="#868686">5/10 - 9/17</text>
<path d="M546.7 262.3 H932.8 V273.6 L929.5 270.1 H550.0 L546.7 273.6 Z" fill="#3ea3e8"/>
<rect x="767.0" y="264.0" width="164.0" height="4.5" fill="#93d6f8"/>
<path d="M546.7 262.3 H767.0 V270.1 H550.0 L546.7 273.6 Z" fill="#2f9ff0"/>
<text x="941.1" y="272.2" font-size="11.3" letter-spacing="0.68" fill="#868686">5/12 - 9/8</text>
<path d="M546.7 284.7 H705.3 V296.0 L702.0 292.5 H550.0 L546.7 296.0 Z" fill="#b5e68d" stroke="#6fc24a" stroke-width="1.3" stroke-linejoin="round"/>
<text x="713.6" y="294.6" font-size="11.3" letter-spacing="0.68" fill="#868686">5/12 - 6/29</text>
<path d="M721.9 307.1 H804.3 V318.40000000000003 L801.0 314.90000000000003 H725.2 L721.9 318.40000000000003 Z" fill="#3ea3e8"/>
<rect x="771.5" y="308.8" width="31.0" height="4.5" fill="#93d6f8"/>
<path d="M721.9 307.1 H771.5 V314.90000000000003 H725.2 L721.9 318.40000000000003 Z" fill="#2f9ff0"/>
<text x="812.6" y="317.0" font-size="11.3" letter-spacing="0.68" fill="#868686">7/5 - 7/30</text>
<text x="694.4" y="317.4" font-size="11.2" font-family="'DejaVu Sans','Noto Sans CJK JP',sans-serif" fill="#888888" text-anchor="end" letter-spacing="-0.2">設計</text>
<path d="M709.1 329.5 H932.8 V340.8 L929.5 337.3 H712.4 L709.1 340.8 Z" fill="#3ea3e8"/>
<rect x="754.0" y="331.2" width="177.0" height="4.5" fill="#93d6f8"/>
<path d="M709.1 329.5 H754.0 V337.3 H712.4 L709.1 340.8 Z" fill="#2f9ff0"/>
<text x="941.1" y="339.4" font-size="11.3" letter-spacing="0.68" fill="#868686">7/1 - 9/8</text>
<text x="681.6" y="339.8" font-size="11.2" font-family="'DejaVu Sans','Noto Sans CJK JP',sans-serif" fill="#888888" text-anchor="end" letter-spacing="-0.2">テスト</text>
<path d="M400.0 396.7 H1046.5 V408.0 L1043.2 404.5 H403.3 L400.0 408.0 Z" fill="#3ea3e8"/>
<rect x="721.0" y="398.4" width="323.7" height="4.5" fill="#93d6f8"/>
<path d="M400.0 396.7 H721.0 V404.5 H403.3 L400.0 408.0 Z" fill="#2f9ff0"/>
<path d="M607.0 419.1 H906.4 V430.40000000000003 L903.1 426.90000000000003 H610.3 L607.0 430.40000000000003 Z" fill="#3ea3e8"/>
<rect x="726.5" y="420.8" width="178.1" height="4.5" fill="#93d6f8"/>
<path d="M607.0 419.1 H726.5 V426.90000000000003 H610.3 L607.0 430.40000000000003 Z" fill="#2f9ff0"/>
<text x="914.7" y="429.0" font-size="11.3" letter-spacing="0.68" fill="#868686">5/31 - 8/31</text>
<text x="579.5" y="429.4" font-size="11.2" font-family="'DejaVu Sans','Noto Sans CJK JP',sans-serif" fill="#888888" text-anchor="end" letter-spacing="-0.2">P機器の開発</text>
<path d="M607.0 441.5 H646.0 V452.8 L642.7 449.3 H610.3 L607.0 452.8 Z" fill="#b5e68d" stroke="#6fc24a" stroke-width="1.3" stroke-linejoin="round"/>
<text x="654.3" y="451.4" font-size="11.3" letter-spacing="0.68" fill="#868686">5/31 - 6/11</text>
<text x="579.5" y="451.8" font-size="11.2" font-family="'DejaVu Sans','Noto Sans CJK JP',sans-serif" fill="#888888" text-anchor="end" letter-spacing="-0.2">01-設計:黒川 悠太</text>
<path d="M679.6 463.9 H906.4 V475.2 L903.1 471.7 H682.9 L679.6 475.2 Z" fill="#3ea3e8"/>
<rect x="885.8" y="465.59999999999997" width="18.8" height="4.5" fill="#93d6f8"/>
<path d="M679.6 463.9 H885.8 V471.7 H682.9 L679.6 475.2 Z" fill="#2f9ff0"/>
<text x="914.7" y="473.8" font-size="11.3" letter-spacing="0.68" fill="#868686">6/22 - 8/31</text>
<text x="652.1" y="474.2" font-size="11.2" font-family="'DejaVu Sans','Noto Sans CJK JP',sans-serif" fill="#888888" text-anchor="end" letter-spacing="-0.2">02-製作:志賀 修造</text>
<path d="M699.4 486.29999999999995 H839.4 V497.59999999999997 L836.1 494.09999999999997 H702.7 L699.4 497.59999999999997 Z" fill="#3ea3e8"/>
<rect x="715.2" y="487.99999999999994" width="122.4" height="4.5" fill="#93d6f8"/>
<path d="M699.4 486.29999999999995 H715.2 V494.09999999999997 H702.7 L699.4 497.59999999999997 Z" fill="#2f9ff0"/>
<text x="847.7" y="496.2" font-size="11.3" letter-spacing="0.68" fill="#868686">6/28 - 8/10</text>
<text x="671.9" y="496.6" font-size="11.2" font-family="'DejaVu Sans','Noto Sans CJK JP',sans-serif" fill="#888888" text-anchor="end" letter-spacing="-0.2">03-テスト:山本 博</text>
<path d="M500.9 508.7 H909.7 V520.0 L906.4 516.5 H504.2 L500.9 520.0 Z" fill="#3ea3e8"/>
<rect x="792.6" y="510.4" width="115.3" height="4.5" fill="#93d6f8"/>
<path d="M500.9 508.7 H792.6 V516.5 H504.2 L500.9 520.0 Z" fill="#2f9ff0"/>
<text x="918.0" y="518.6" font-size="11.3" letter-spacing="0.68" fill="#868686">4/28 - 9/1</text>
<path d="M504.2 531.0999999999999 H916.3 V542.3999999999999 L913.0 538.8999999999999 H507.5 L504.2 542.3999999999999 Z" fill="#3ea3e8"/>
<rect x="863.5" y="532.8" width="51.0" height="4.5" fill="#93d6f8"/>
<path d="M504.2 531.0999999999999 H863.5 V538.8999999999999 H507.5 L504.2 542.3999999999999 Z" fill="#2f9ff0"/>
<text x="924.6" y="541.0" font-size="11.3" letter-spacing="0.68" fill="#868686">4/29 - 9/3</text>
<path d="M504.2 553.5 H574.6 V564.8 L571.3 561.3 H507.5 L504.2 564.8 Z" fill="#b5e68d" stroke="#6fc24a" stroke-width="1.3" stroke-linejoin="round"/>
<text x="582.9" y="563.4" font-size="11.3" letter-spacing="0.68" fill="#868686">4/29 - 5/20</text>
<path d="M588.1 575.9 H727.7 V587.1999999999999 L724.4 583.6999999999999 H591.4 L588.1 587.1999999999999 Z" fill="#b5e68d" stroke="#6fc24a" stroke-width="1.3" stroke-linejoin="round"/>
<text x="736.0" y="585.8" font-size="11.3" letter-spacing="0.68" fill="#868686">5/25 - 7/6</text>
<text x="560.6" y="586.2" font-size="11.2" font-family="'DejaVu Sans','Noto Sans CJK JP',sans-serif" fill="#888888" text-anchor="end" letter-spacing="-0.2">案件B:黒川 悠太</text>
<path d="M679.6 598.3 H916.3 V609.5999999999999 L913.0 606.0999999999999 H682.9 L679.6 609.5999999999999 Z" fill="#3ea3e8"/>
<rect x="834.0" y="600.0" width="80.5" height="4.5" fill="#93d6f8"/>
<path d="M679.6 598.3 H834.0 V606.0999999999999 H682.9 L679.6 609.5999999999999 Z" fill="#2f9ff0"/>
<text x="924.6" y="608.2" font-size="11.3" letter-spacing="0.68" fill="#868686">6/22 - 9/3</text>
<text x="652.1" y="608.6" font-size="11.2" font-family="'DejaVu Sans','Noto Sans CJK JP',sans-serif" fill="#888888" text-anchor="end" letter-spacing="-0.2">案件C:岡本 直哉</text>
<path d="M400.0 620.7 H804.3 V632.0 L801.0 628.5 H403.3 L400.0 632.0 Z" fill="#3ea3e8"/>
<rect x="696.3" y="622.4000000000001" width="106.2" height="4.5" fill="#93d6f8"/>
<path d="M400.0 620.7 H696.3 V628.5 H403.3 L400.0 632.0 Z" fill="#2f9ff0"/>
<text x="812.6" y="630.6" font-size="11.3" letter-spacing="0.68" fill="#868686">5/3 - 7/30</text>
<path d="M705.5 288.6 L727.7 288.6 L727.7 301.0" fill="none" stroke="#2a6ea8" stroke-width="1.1"/>
<path d="M724.3 300.2 H731.1 L727.7 306.4 Z" fill="#2a6ea8"/>
<path d="M715.5 288.6 L715.5 323.0" fill="none" stroke="#2a6ea8" stroke-width="1.1"/>
<path d="M712.1 322.2 H718.9 L715.5 328.4 Z" fill="#2a6ea8"/>
<path d="M575.0 557.5 L594.1 557.5 L594.1 570.0" fill="none" stroke="#2a6ea8" stroke-width="1.1"/>
<path d="M590.7 569.1 H597.5 L594.1 575.3 Z" fill="#2a6ea8"/>
<polyline points="753.7,211.5 690.7,224.1 793.4,246.1 754.6,257.3 759,266.8 754.3,280 753.5,302.4 767.8,312.8 754.2,325.2 755.8,337.7 754,350 754.2,392.2 735.6,403.2 754,414.5 664.3,425.7 754,436.9 754.4,459.3 737.6,470.5 754,481.7 704,492.9 754,504.2 749.6,515.2 753.8,526.5 772.8,537.8 754.4,549.2 754.9,594 766.3,605.3 753.8,616.2 701.9,627.6 754,638.8" fill="none" stroke="#d9636a" stroke-width="1"/>
<path d="M753.7 211 L750.2 207 A4.4 4.4 0 1 1 757.2 207 Z" fill="#fff" stroke="#d63b3b" stroke-width="1.7" stroke-linejoin="round"/>
</svg>
<svg class="b" style="left:0;top:0;pointer-events:none;" width="1054" height="638" viewBox="0 0 1054 638"><rect x="0" y="0" width="1054" height="1.1" fill="#c9cdd2"/><rect x="0" y="0" width="1.1" height="638" fill="#c2c6d2"/><rect x="1052.5" y="0" width="1.5" height="638" fill="#bdbdbd"/><rect x="0" y="636.3" width="1054" height="1.7" fill="#bdbdbd"/></svg>
</div></body></html>
